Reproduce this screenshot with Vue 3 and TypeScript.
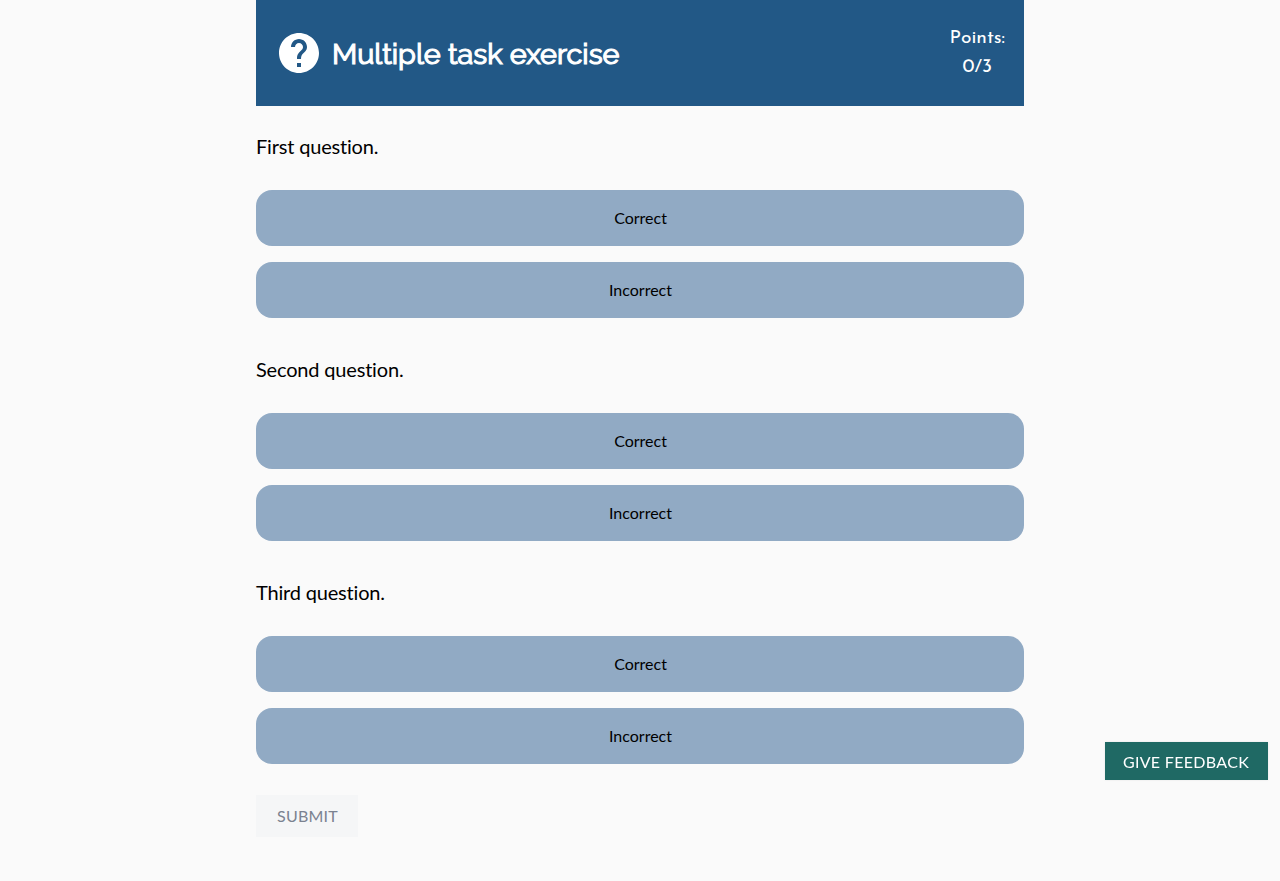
<script setup lang="ts">
import { ref, computed } from 'vue'

interface Task {
  id: number
  title: string
  options: string[]
}

const tasks: Task[] = [
  { id: 1, title: 'First question.', options: ['Correct', 'Incorrect'] },
  { id: 2, title: 'Second question.', options: ['Correct', 'Incorrect'] },
  { id: 3, title: 'Third question.', options: ['Correct', 'Incorrect'] },
]

const answers = ref<Record<number, string>>({})
const complete = computed(() => tasks.every((task) => answers.value[task.id]))
</script>

<template>
  <main class="page">
    <section class="quiz">
      <header class="banner">
        <svg class="help" viewBox="0 0 24 24" aria-hidden="true">
          <path d="M12 2C6.48 2 2 6.48 2 12s4.48 10 10 10 10-4.48 10-10S17.52 2 12 2zm1 17h-2v-2h2v2zm2.07-7.75l-.9.92C13.45 12.9 13 13.5 13 15h-2v-.5c0-1.1.45-2.1 1.17-2.83l1.24-1.26c.37-.36.59-.86.59-1.41 0-1.1-.9-2-2-2s-2 .9-2 2H8c0-2.21 1.79-4 4-4s4 1.79 4 4c0 .88-.36 1.68-.93 2.25z" />
        </svg>
        <h1 class="title">Multiple task exercise</h1>
        <div class="points">
          <span class="label">Points:</span>
          <span class="score">0/3</span>
        </div>
      </header>
      <article v-for="task in tasks" :key="task.id" class="task">
        <h2 class="question">{{ task.title }}</h2>
        <div class="options">
          <button
            v-for="option in task.options"
            :key="option"
            class="option"
            type="button"
            @click="answers[task.id] = option"
          >{{ option }}</button>
        </div>
      </article>
      <button class="submit" type="button" :disabled="!complete">SUBMIT</button>
    </section>
    <button class="feedback" type="button">GIVE FEEDBACK</button>
  </main>
</template>

<style>
body {
  background: #fafafa;
}
</style>

<style scoped>
.page {
  min-height: 881px;
  box-sizing: border-box;
  background: #fafafa;
  font-family: Lato, sans-serif;
  font-variant-ligatures: none;
  color: #000;
}
.quiz {
  width: 768px;
  margin: 0 auto;
}
.banner {
  display: flex;
  align-items: center;
  height: 106px;
  padding: 0 19px 0 19px;
  box-sizing: border-box;
  background: #225886;
  color: #fff;
}
.help {
  width: 48px;
  height: 48px;
  fill: #fff;
}
.title {
  margin: 2px 0 0 9px;
  font-family: Raleway, Lato, sans-serif;
  font-size: 28.8px;
  font-weight: 400;
  line-height: 36px;
  white-space: nowrap;
  -webkit-text-stroke: 1.2px #fff;
}
.points {
  display: flex;
  flex-direction: column;
  align-items: center;
  margin-left: auto;
  margin-top: -1px;
  font-family: "Josefin Sans", Lato, sans-serif;
  font-size: 19.2px;
  line-height: 29px;
}
.task {
  display: flex;
  flex-direction: column;
  height: 223px;
}
.question {
  margin: 24px 0 28px;
  font-size: 20px;
  font-weight: 400;
  line-height: 32px;
  letter-spacing: -0.18px;
}
.options {
  display: flex;
  flex-direction: column;
  gap: 16px;
}
button {
  border: 0;
  padding: 0;
  font-family: Lato, sans-serif;
  font-size: 16px;
}
.option {
  height: 56px;
  padding: 0 0 2px 1px;
  border-radius: 16px;
  background: #91aac4;
  color: #000;
}
.submit {
  display: block;
  width: 102px;
  height: 42px;
  margin-top: 20px;
  padding: 0 0 2px 1px;
  background: #f5f6f7;
  color: #7b8290;
  letter-spacing: 0.25px;
}
.feedback {
  position: fixed;
  right: 12px;
  bottom: 101px;
  width: 163px;
  height: 38px;
  padding-right: 1px;
  background: #1f6964;
  color: #fff;
  letter-spacing: 0.32px;
  box-shadow: 0 0 2px rgba(45, 45, 45, 0.1);
}
</style>
